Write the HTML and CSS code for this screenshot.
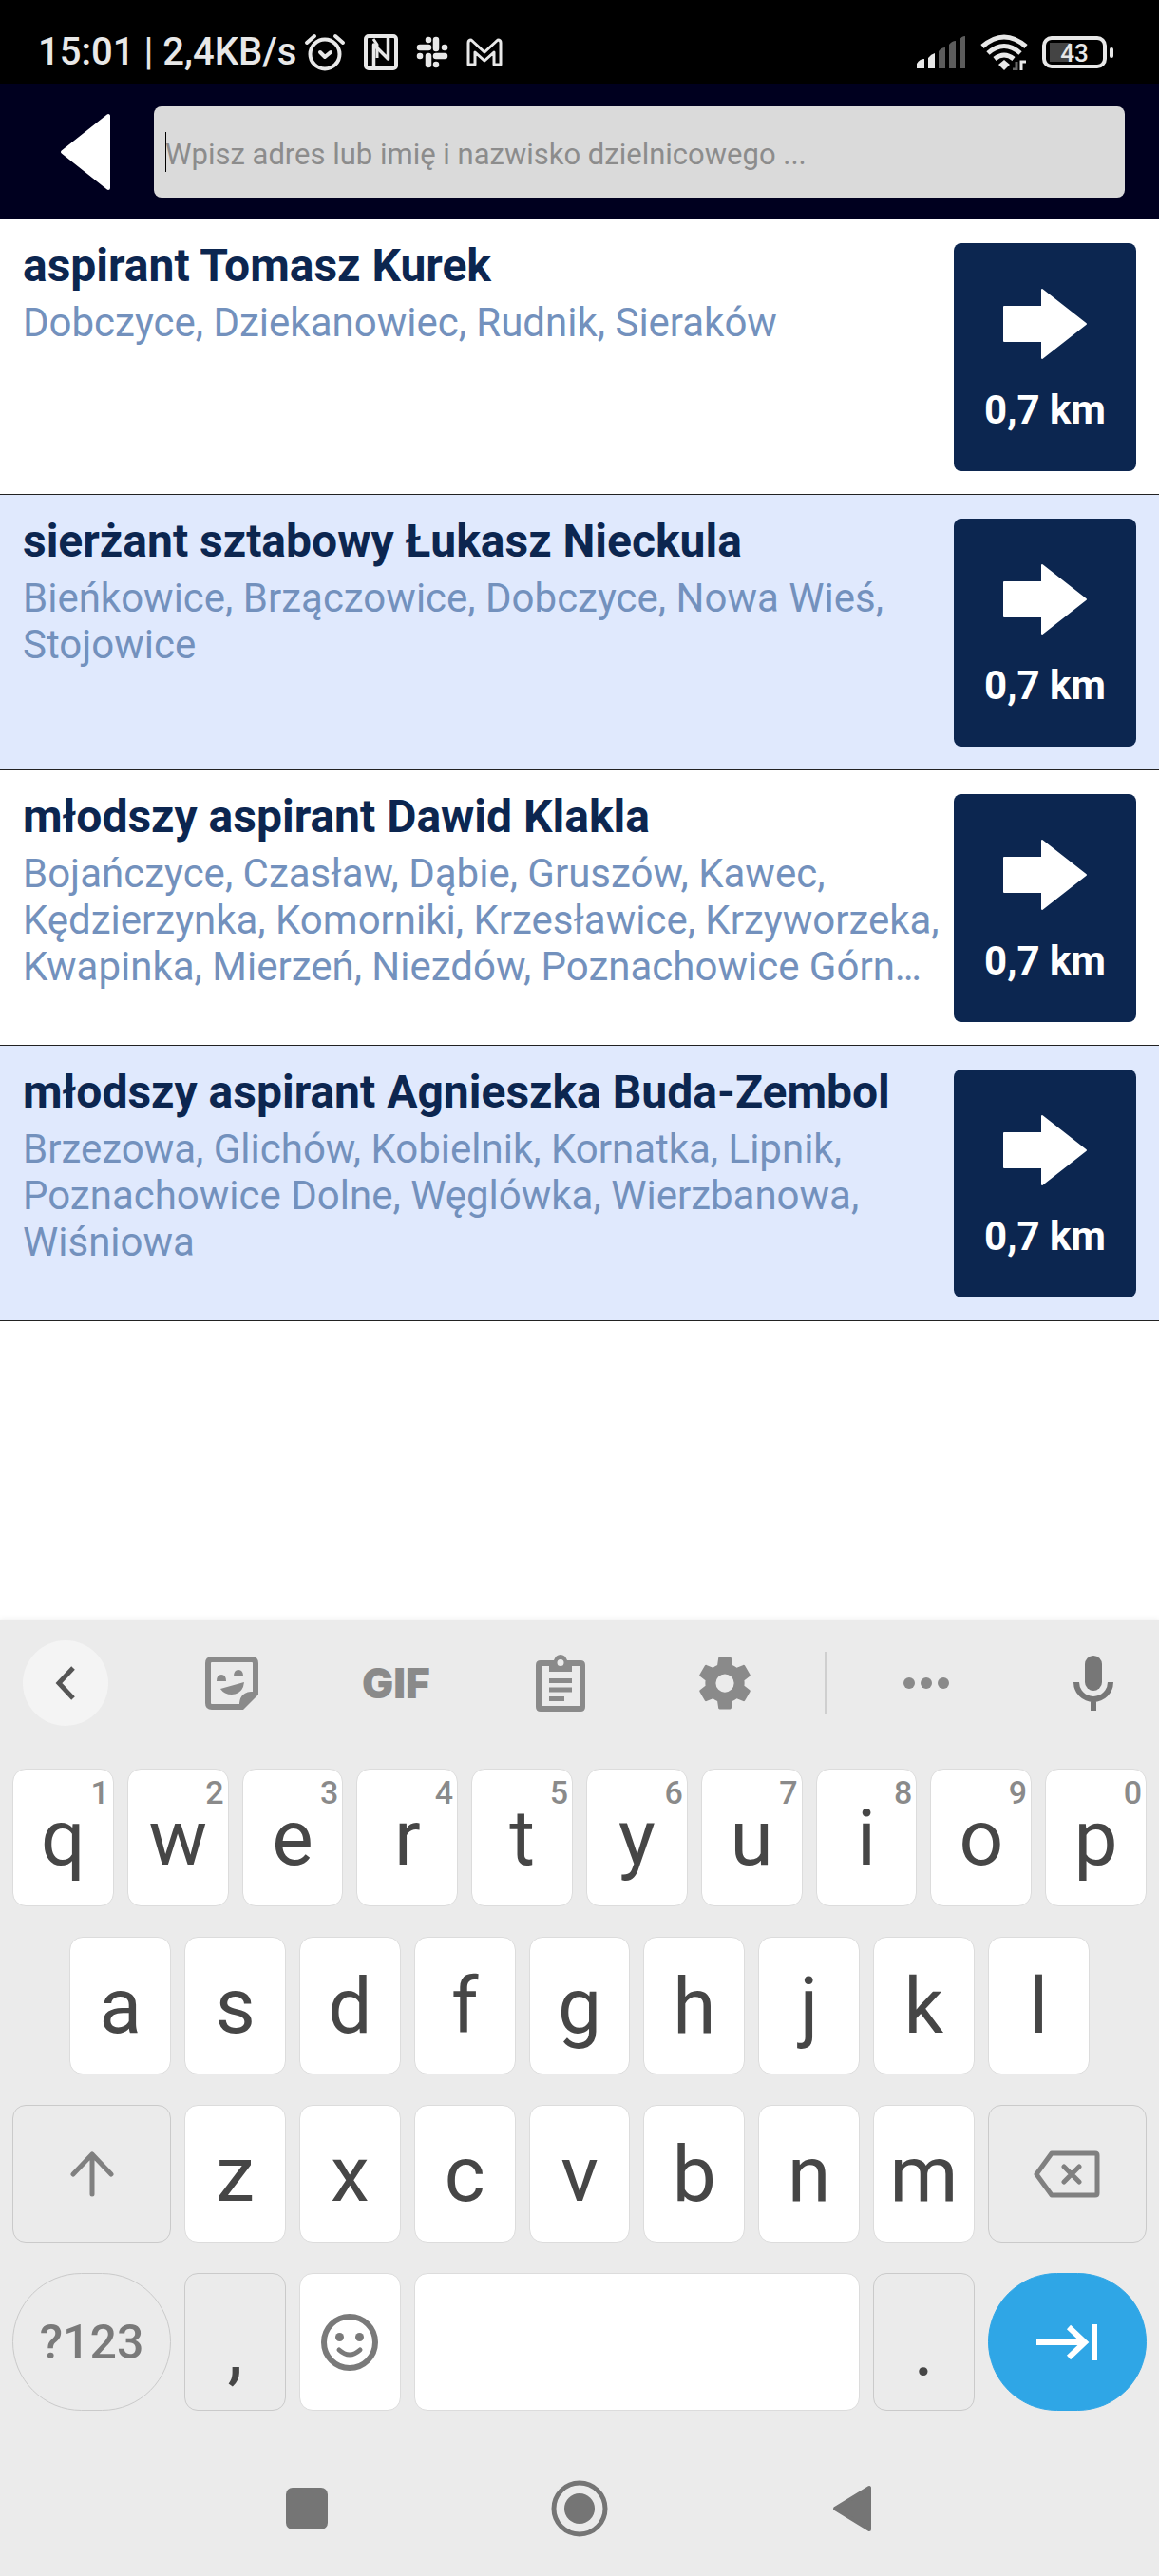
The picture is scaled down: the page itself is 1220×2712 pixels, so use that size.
FILE: index.html
```html
<!DOCTYPE html>
<html lang="pl">
<head>
<meta charset="utf-8">
<meta name="viewport" content="width=device-width, initial-scale=1">
<title>Dzielnicowi</title>
<link rel="stylesheet" href="styles.css">
</head>
<body>
<div class="status">
  <span class="status-text">15:01 | 2,4KB/s</span>
  <div class="status-icons">
    <svg width="44" height="40" viewBox="0 0 44 40" fill="none" stroke="#e8e8e8"><circle cx="22" cy="22" r="15.5" stroke-width="4"/><path d="M3 10 11 3M41 10 33 3" stroke-width="4" stroke-linecap="round"/><path d="M17 20l5 5 6-5" stroke-width="4" stroke-linecap="round" stroke-linejoin="round"/></svg>
    <svg width="36" height="38" viewBox="0 0 36 38" fill="none" stroke="#e8e8e8" stroke-linejoin="round"><rect x="2" y="2" width="32" height="34" rx="3" stroke-width="4"/><path d="M10.500 34V11L25.500 26V4" stroke-width="3.500"/><path d="M10 5l4 6v14" stroke-width="3"/></svg>
    <svg width="34" height="34" viewBox="0 0 34 34" stroke="#e8e8e8" stroke-width="6.500" stroke-linecap="round"><path d="M4 12h9M13 4v.1M21 4v9M30 12h.1M21 21h9M21 30v.1M13 21v9M4 21h.1"/></svg>
    <svg width="38" height="30" viewBox="0 0 38 30" fill="none" stroke="#e8e8e8" stroke-width="3" stroke-linejoin="round"><path d="M2 28V5q0-3 3-3l14 13L33 2q3 0 3 3v23h-7V15L19 24 9 15v13Z"/></svg>
  </div>
  <div class="status-right">
    <svg width="52" height="34" viewBox="0 0 52 34"><path d="M0 34v-5q3-5 8-5v10ZM12 34V23q3-4 7-5v16Z" fill="#e8e8e8"/><path d="M23 34V16q3-4 7-4v22ZM34 34V9q3-4 7-4v29ZM45 34V4q2-4 6-4v34Z" fill="#5c5c5c"/></svg>
    <svg width="50" height="38" viewBox="0 0 50 38" fill="none" stroke="#e8e8e8" stroke-width="5"><path d="M2 13Q25-7 48 13M8 20Q25 5 42 20M15 26Q25 18 35 26"/><path d="m19 32 6-5 6 5-6 6Z" fill="#e8e8e8" stroke="none"/><path d="M43 38V29h5" stroke-width="3"/><path d="M38 29v8h-4" stroke="#666" stroke-width="3"/></svg>
    <div class="battery"><span>43</span></div>
  </div>
</div>

<header class="topbar">
  <button class="back" aria-label="Wstecz"><svg width="54" height="82" viewBox="0 0 54 82"><path d="M3 41 51 3v76Z" fill="#fff" stroke="#fff" stroke-width="4" stroke-linejoin="round"/></svg></button>
  <div class="search"><input type="text" aria-label="Szukaj" placeholder="Wpisz adres lub imię i nazwisko dzielnicowego ..."></div>
</header>

<main class="list">
  <article class="officer">
    <div class="info"><h2>aspirant Tomasz Kurek</h2><p>Dobczyce, Dziekanowiec, Rudnik, Sieraków</p></div>
    <button class="go"><svg width="90" height="76" viewBox="0 0 90 76"><path d="M2 20H42V2L88 38 42 74V56H2Z" fill="#fff" stroke="#fff" stroke-width="2" stroke-linejoin="round"/></svg><span>0,7 km</span></button>
  </article>
  <article class="officer">
    <div class="info"><h2>sierżant sztabowy Łukasz Nieckula</h2><p>Bieńkowice, Brzączowice, Dobczyce, Nowa Wieś, Stojowice</p></div>
    <button class="go"><svg width="90" height="76" viewBox="0 0 90 76"><path d="M2 20H42V2L88 38 42 74V56H2Z" fill="#fff" stroke="#fff" stroke-width="2" stroke-linejoin="round"/></svg><span>0,7 km</span></button>
  </article>
  <article class="officer">
    <div class="info"><h2>młodszy aspirant Dawid Klakla</h2><p>Bojańczyce, Czasław, Dąbie, Gruszów, Kawec, Kędzierzynka, Komorniki, Krzesławice, Krzyworzeka, Kwapinka, Mierzeń, Niezdów, Poznachowice Górn…</p></div>
    <button class="go"><svg width="90" height="76" viewBox="0 0 90 76"><path d="M2 20H42V2L88 38 42 74V56H2Z" fill="#fff" stroke="#fff" stroke-width="2" stroke-linejoin="round"/></svg><span>0,7 km</span></button>
  </article>
  <article class="officer">
    <div class="info"><h2>młodszy aspirant Agnieszka Buda-Zembol</h2><p>Brzezowa, Glichów, Kobielnik, Kornatka, Lipnik, Poznachowice Dolne, Węglówka, Wierzbanowa, Wiśniowa</p></div>
    <button class="go"><svg width="90" height="76" viewBox="0 0 90 76"><path d="M2 20H42V2L88 38 42 74V56H2Z" fill="#fff" stroke="#fff" stroke-width="2" stroke-linejoin="round"/></svg><span>0,7 km</span></button>
  </article>
</main>

<section class="keyboard" aria-label="Klawiatura">
  <div class="tools">
    <button class="collapse" aria-label="Zwiń"><svg width="24" height="38" viewBox="0 0 24 38" fill="none" stroke="#555" stroke-width="5"><path d="M20 3 5 19l15 16"/></svg></button>
    <button aria-label="Naklejki"><svg width="56" height="56" viewBox="0 0 56 56"><path d="M7 3H49q4 0 4 4V38L38 53H7q-4 0-4-4V7q0-4 4-4Z" fill="none" stroke="#8a8a8a" stroke-width="6" stroke-linejoin="round"/><path d="M36 56V49q1-11 12-12h8V40L40 56ZM12 26q0-7 5-7t5 7ZM30 21q0-7 5-7t5 7ZM16 34 41 27Q40 39 28 40 20 40 16 34Z" fill="#8a8a8a"/></svg></button>
    <button class="gif">GIF</button>
    <button aria-label="Schowek"><svg width="52" height="60" viewBox="0 0 52 60"><path d="M15 9H5q-2 0-2 2v44q0 2 2 2h42q2 0 2-2V11q0-2-2-2H37" fill="none" stroke="#8a8a8a" stroke-width="6"/><path d="M14 18V6h5q2-6 7-6t7 6h5v12ZM26 5a3.500 3.500 0 1 0 0 7 3.500 3.500 0 0 0 0-7Z" fill="#8a8a8a" fill-rule="evenodd"/><path d="M14 27.500h24M14 37h24M14 46.500h16" stroke="#8a8a8a" stroke-width="5"/></svg></button>
    <button aria-label="Ustawienia"><svg width="66" height="66" viewBox="0 0 24 24"><path fill="#8a8a8a" d="M19.430 12.980c.040-.320.070-.640.070-.980s-.030-.660-.070-.980l2.110-1.650c.190-.150.240-.420.120-.640l-2-3.460c-.120-.220-.390-.300-.610-.220l-2.490 1c-.520-.400-1.080-.730-1.690-.980l-.380-2.650C14.460 2.180 14.250 2 14 2h-4c-.250 0-.460.180-.490.420l-.380 2.650c-.610.250-1.170.590-1.690.980l-2.490-1c-.230-.090-.490 0-.610.220l-2 3.460c-.130.220-.070.490.120.640l2.110 1.650c-.040.320-.070.650-.070.980s.030.660.070.980l-2.110 1.650c-.190.150-.240.420-.120.640l2 3.460c.120.220.390.300.610.220l2.490-1c.520.400 1.080.730 1.690.980l.380 2.650c.030.240.240.420.490.420h4c.250 0 .460-.180.490-.420l.380-2.650c.610-.250 1.170-.590 1.690-.980l2.490 1c.230.090.490 0 .610-.220l2-3.460c.120-.220.070-.490-.120-.640l-2.110-1.650ZM12 15.500a3.500 3.500 0 1 1 0-7 3.500 3.500 0 0 1 0 7Z"/></svg></button>
    <span class="divider"></span>
    <button aria-label="Więcej"><svg width="48" height="14" viewBox="0 0 48 14" fill="#8a8a8a"><circle cx="6" cy="7" r="6"/><circle cx="24" cy="7" r="6"/><circle cx="42" cy="7" r="6"/></svg></button>
    <button class="mic" aria-label="Mikrofon"><svg width="42" height="58" viewBox="0 0 42 58"><rect x="12" y="0" width="18" height="37" rx="9" fill="#777"/><path d="M3 28a18 18 0 0 0 36 0M21 46v12" fill="none" stroke="#777" stroke-width="6"/></svg></button>
  </div>
  <div class="keys">
    <div class="row">
      <button class="key">q<sup>1</sup></button><button class="key">w<sup>2</sup></button><button class="key">e<sup>3</sup></button><button class="key">r<sup>4</sup></button><button class="key">t<sup>5</sup></button><button class="key">y<sup>6</sup></button><button class="key">u<sup>7</sup></button><button class="key">i<sup>8</sup></button><button class="key">o<sup>9</sup></button><button class="key">p<sup>0</sup></button>
    </div>
    <div class="row middle">
      <button class="key">a</button><button class="key">s</button><button class="key">d</button><button class="key">f</button><button class="key">g</button><button class="key">h</button><button class="key">j</button><button class="key">k</button><button class="key">l</button>
    </div>
    <div class="row">
      <button class="key wide flat" aria-label="Shift"><svg width="46" height="50" viewBox="0 0 46 50" fill="none" stroke="#808080" stroke-width="5" stroke-linecap="round" stroke-linejoin="round"><path d="M23 46V4M3 25 23 4l20 21"/></svg></button>
      <button class="key">z</button><button class="key">x</button><button class="key">c</button><button class="key">v</button><button class="key">b</button><button class="key">n</button><button class="key">m</button>
      <button class="key wide flat" aria-label="Usuń"><svg width="70" height="50" viewBox="0 0 70 50" fill="none" stroke="#808080" stroke-width="5" stroke-linecap="round" stroke-linejoin="round"><path d="M19 3H65q2 0 2 2V45q0 2-2 2H19L3 25ZM32 17 48 33M48 17 32 33" /></svg></button>
    </div>
    <div class="row">
      <button class="key wide flat round symbols">?123</button>
      <button class="key flat mark">,</button>
      <button class="key" aria-label="Emoji"><svg width="60" height="60" viewBox="0 0 60 60" fill="none" stroke="#7a7a7a" stroke-width="6" stroke-linecap="round"><circle cx="30" cy="30" r="27"/><path d="M19 38q11 10 22 0" stroke-width="5"/><g fill="#7a7a7a" stroke="none"><circle cx="19.500" cy="24.500" r="4.500"/><circle cx="40.500" cy="24.500" r="4.500"/></g></svg></button>
      <button class="key space" aria-label="Spacja"></button>
      <button class="key flat mark">.</button>
      <button class="key wide round enter" aria-label="Dalej"><svg width="64" height="38" viewBox="0 0 64 38" fill="none" stroke="#fff" stroke-width="6"><path d="M0 19H51M34 3 51 19 34 35M61 0v38"/></svg></button>
    </div>
  </div>
  <nav class="nav">
    <button aria-label="Ostatnie"><svg width="44" height="44" viewBox="0 0 44 44"><rect width="44" height="44" rx="7" fill="#757575"/></svg></button>
    <button aria-label="Ekran główny"><svg width="60" height="60" viewBox="0 0 60 60"><circle cx="30" cy="30" r="27" fill="none" stroke="#757575" stroke-width="5"/><circle cx="30" cy="30" r="16" fill="#757575"/></svg></button>
    <button aria-label="Cofnij"><svg width="42" height="50" viewBox="0 0 42 50"><path d="M3 25 39 3v44Z" fill="#757575" stroke="#757575" stroke-width="4" stroke-linejoin="round"/></svg></button>
  </nav>
</section>
</body>
</html>
```
FILE: styles.css
```css
* {
  box-sizing: border-box;
}

body {
  margin: 0;
  min-height: 100vh;
  display: flex;
  flex-direction: column;
  background: #fff;
  font-family: Roboto, "Noto Sans", sans-serif;
}

button {
  border: 0;
  padding: 0;
  background: none;
  font: inherit;
  color: inherit;
  display: flex;
  align-items: center;
  justify-content: center;
}

svg {
  display: block;
  flex: none;
}

/* Status bar */
.status {
  height: 88px;
  padding: 22px 48px 0 40px;
  display: flex;
  align-items: center;
  background: #000;
  color: #e8e8e8;
}

.status-text {
  font-size: 40px;
  font-weight: 500;
  line-height: 48px;
}

.status-icons {
  display: flex;
  align-items: center;
  gap: 19px;
  margin-left: 8px;
}

.status-right {
  display: flex;
  align-items: center;
  gap: 15px;
  margin-left: auto;
}

.battery {
  position: relative;
  width: 68px;
  height: 34px;
  margin-right: 7px;
  border: 4px solid #e8e8e8;
  border-radius: 10px;
  background: linear-gradient(#444, #444) 4px center / 22px 20px no-repeat;
  text-align: center;
  font-size: 26px;
  font-weight: 500;
  line-height: 28px;
}

.battery::after {
  content: "";
  position: absolute;
  right: -11px;
  top: 8px;
  width: 4px;
  height: 11px;
  border-radius: 2px;
  background: #e8e8e8;
}

/* Search header */
.topbar {
  display: flex;
  padding: 24px 36px 23px 0;
  background: #00001f;
}

.back {
  width: 162px;
  padding-left: 18px;
}

.search {
  position: relative;
  flex: 1;
}

.search::before {
  content: "";
  position: absolute;
  left: 12px;
  top: 27px;
  width: 1px;
  height: 42px;
  background: #000;
}

.search input {
  display: block;
  width: 100%;
  height: 96px;
  padding: 4px 12px 0;
  border: 0;
  border-radius: 8px;
  background: #dadada;
  font: 31px Roboto, sans-serif;
}

.search input::placeholder {
  color: #8c8c8c;
}

/* Officer list */
.list {
  flex: 1;
}

.officer {
  display: flex;
  min-height: 290px;
  padding: 25px 24px 24px;
  gap: 8px;
  border-bottom: 1px solid #222;
}

.officer:nth-child(even) {
  background: #e0e9fd;
}

.info {
  flex: 1;
  min-width: 0;
}

.info h2 {
  margin: -4px 0 7px;
  font-size: 48px;
  font-weight: 700;
  line-height: 56px;
  color: #0c2650;
}

.info p {
  margin: 0;
  font-size: 42px;
  line-height: 49px;
  color: #7391bd;
}

.go {
  width: 192px;
  height: 240px;
  padding-top: 7px;
  flex-direction: column;
  gap: 28px;
  border-radius: 8px;
  background: #0c2650;
  color: #fff;
  font-size: 42px;
  font-weight: 700;
  line-height: 50px;
}

/* Keyboard */
.keyboard {
  background: #ebebeb;
  box-shadow: 0 -2px 6px rgba(0, 0, 0, 0.05);
}

.tools {
  display: grid;
  grid-template-columns: 133fr repeat(4, 173fr) 38fr 174fr 110fr;
  align-items: center;
  height: 132px;
  padding: 0 48px 0 24px;
}

.collapse {
  width: 90px;
  height: 90px;
  border-radius: 50%;
  background: #f4f4f4;
}

.gif {
  font-family: Inter, sans-serif;
  font-size: 44px;
  font-weight: 900;
  color: #8a8a8a;
}

.divider {
  justify-self: center;
  width: 2px;
  height: 66px;
  background: #cfcfcf;
}

.mic {
  justify-content: flex-end;
}

.keys {
  display: flex;
  flex-direction: column;
  gap: 32px;
  padding: 24px 6px 32px;
}

.row {
  display: grid;
  grid-template-columns: repeat(20, 1fr);
}

.key {
  position: relative;
  grid-column: span 2;
  height: 145px;
  margin: 0 7px;
  border: 1px solid #dcdcdc;
  border-radius: 14px;
  background: #fff;
  color: #464646;
  font-size: 82px;
  line-height: 96px;
}

.middle .key:first-child {
  grid-column: 2 / span 2;
}

.key sup {
  position: absolute;
  top: 7px;
  right: 4px;
  font-size: 34px;
  font-weight: 500;
  line-height: 34px;
  color: #8a8a8a;
}

.wide {
  grid-column: span 3;
}

.space {
  grid-column: span 8;
}

.flat {
  border-color: #cacaca;
  background: #ebebeb;
}

.mark {
  padding-top: 14px;
}

.round {
  border-radius: 73px;
}

.symbols {
  font-size: 50px;
  font-weight: 500;
  color: #7a7a7a;
}

.enter {
  border-color: #2fa6e6;
  background: #2fa6e6;
}

.nav {
  display: flex;
  height: 142px;
  padding: 0 179px;
}

.nav button {
  flex: 1;
}
```
